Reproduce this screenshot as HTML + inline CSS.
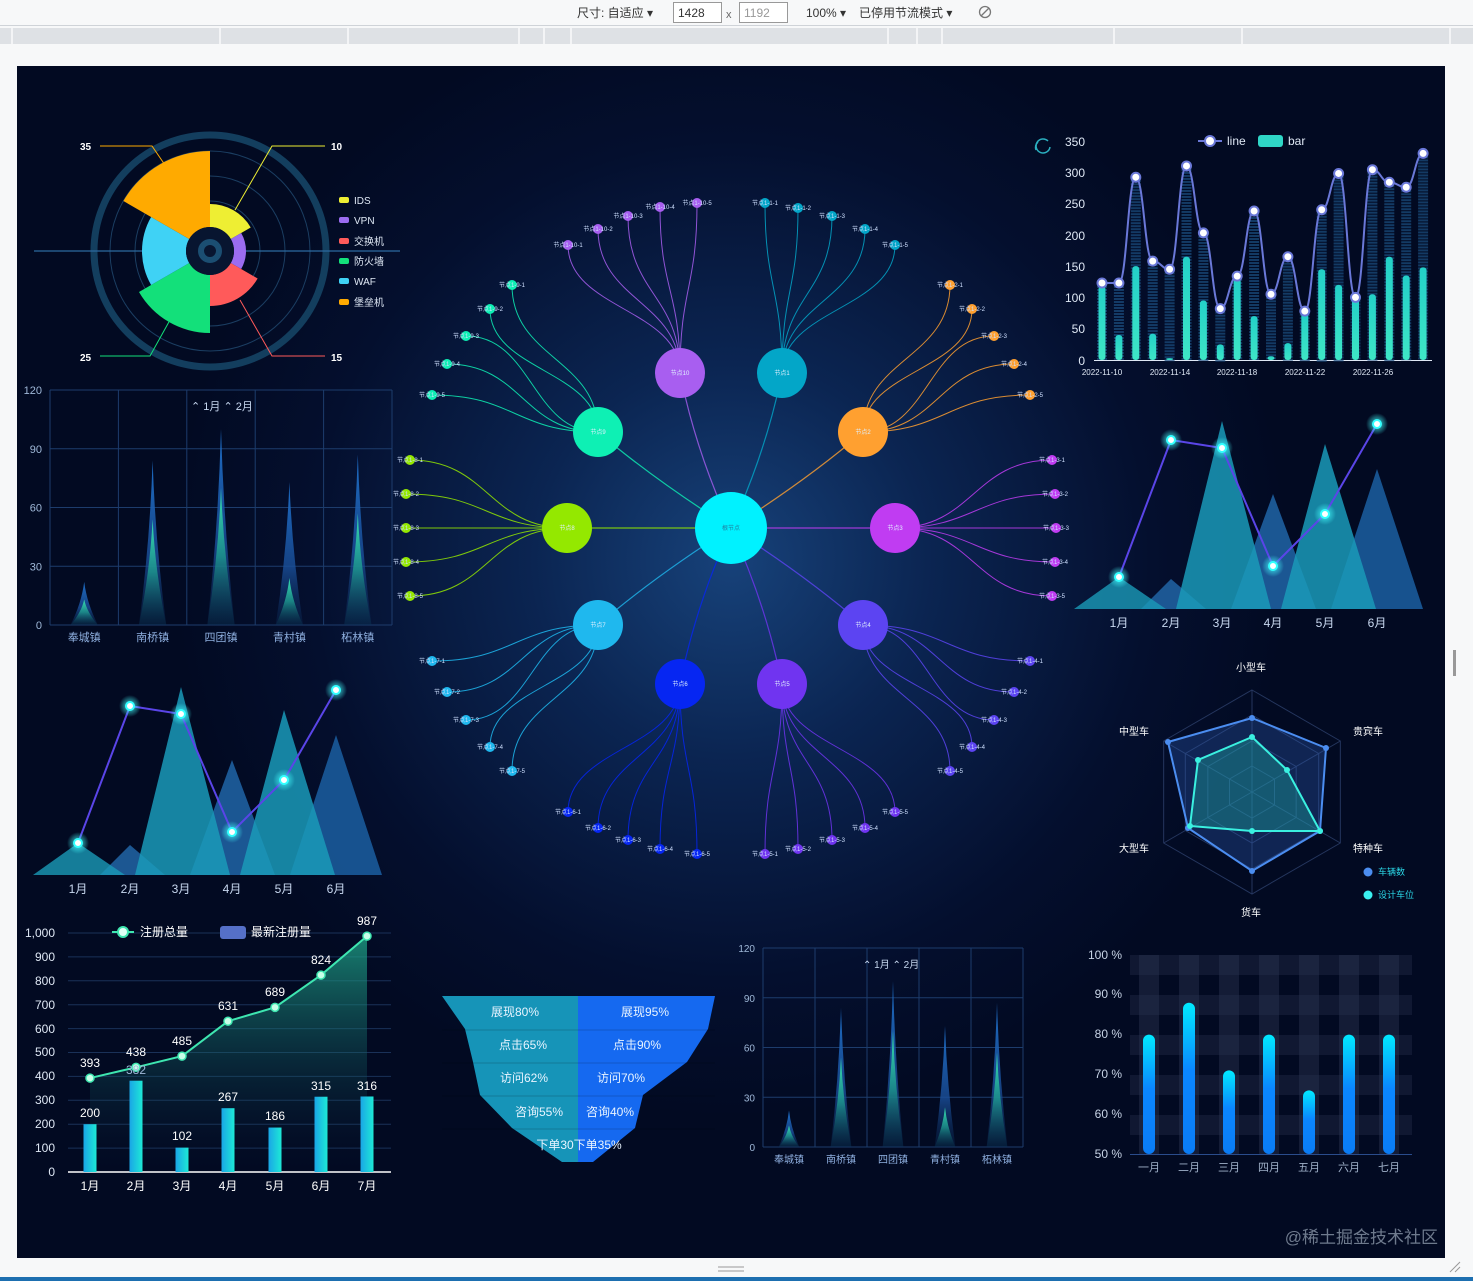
<!DOCTYPE html>
<html><head><meta charset="utf-8">
<style>
html,body{margin:0;padding:0;background:#f7f8f9;width:1473px;height:1281px;overflow:hidden}
svg{display:block}
text{font-family:"Liberation Sans","Noto Sans CJK SC",sans-serif}
</style></head>
<body>
<svg id="s" width="1473" height="1281" viewBox="0 0 1473 1281" xmlns="http://www.w3.org/2000/svg">
<defs>
<radialGradient id="bgG" cx="731" cy="560" r="560" gradientUnits="userSpaceOnUse">
<stop offset="0" stop-color="#17427a"/><stop offset="0.35" stop-color="#0b2552"/><stop offset="0.75" stop-color="#040f2e"/><stop offset="1" stop-color="#020a22"/>
</radialGradient>
<linearGradient id="spB" x1="0" y1="0" x2="0" y2="1"><stop offset="0" stop-color="#1e6fc8"/><stop offset="0.6" stop-color="#1a4f9a" stop-opacity="0.8"/><stop offset="1" stop-color="#0b2a55" stop-opacity="0.3"/></linearGradient>
<linearGradient id="spG" x1="0" y1="0" x2="0" y2="1"><stop offset="0" stop-color="#39e0b0"/><stop offset="0.5" stop-color="#1e9a90" stop-opacity="0.8"/><stop offset="1" stop-color="#0a3b55" stop-opacity="0.2"/></linearGradient>
<linearGradient id="barT" x1="0" y1="0" x2="0" y2="1"><stop offset="0" stop-color="#23d0c8"/><stop offset="1" stop-color="#3ee6c6"/></linearGradient>
<linearGradient id="barBlue" x1="0" y1="0" x2="0" y2="1"><stop offset="0" stop-color="#00eaff"/><stop offset="0.45" stop-color="#0a86ff"/><stop offset="1" stop-color="#0a7cf5"/></linearGradient>
<linearGradient id="regB" x1="0" y1="0" x2="1" y2="0"><stop offset="0" stop-color="#1aa6e6"/><stop offset="1" stop-color="#1de9d6"/></linearGradient>
<linearGradient id="areaG" x1="0" y1="0" x2="0" y2="1"><stop offset="0" stop-color="#1fa88a" stop-opacity="0.75"/><stop offset="1" stop-color="#0a2040" stop-opacity="0"/></linearGradient>
<linearGradient id="stripe" x1="0" y1="0" x2="0" y2="1"><stop offset="0" stop-color="#1f4f86"/><stop offset="1" stop-color="#0c2a50"/></linearGradient>
<radialGradient id="glow"><stop offset="0" stop-color="#4ff" stop-opacity="0.9"/><stop offset="1" stop-color="#4ff" stop-opacity="0"/></radialGradient>
</defs>

<!-- browser toolbar -->
<rect x="0" y="0" width="1473" height="25" fill="#f7f8f9"/>
<line x1="0" y1="25.5" x2="1473" y2="25.5" stroke="#cfd3d8"/>
<text x="577" y="17" font-size="12" fill="#333">尺寸: 自适应 ▾</text>
<rect x="673.5" y="2.5" width="48" height="20" fill="#fff" stroke="#999"/>
<text x="678" y="17" font-size="12" fill="#333">1428</text>
<text x="726" y="18" font-size="11" fill="#666">x</text>
<rect x="739.5" y="2.5" width="48" height="20" fill="#fff" stroke="#999"/>
<text x="744" y="17" font-size="12" fill="#999">1192</text>
<text x="806" y="17" font-size="12" fill="#333">100% ▾</text>
<text x="859" y="17" font-size="12" fill="#333">已停用节流模式 ▾</text>
<circle cx="985" cy="12" r="5.5" fill="none" stroke="#777" stroke-width="1.3"/><line x1="981" y1="16" x2="989" y2="8" stroke="#777" stroke-width="1.3"/>
<rect x="0" y="28" width="1473" height="16" fill="#dee1e5"/>
<g stroke="#f3f4f6" stroke-width="2">
<line x1="12" y1="28" x2="12" y2="44"/><line x1="220" y1="28" x2="220" y2="44"/><line x1="348" y1="28" x2="348" y2="44"/><line x1="519" y1="28" x2="519" y2="44"/><line x1="544" y1="28" x2="544" y2="44"/><line x1="571" y1="28" x2="571" y2="44"/><line x1="888" y1="28" x2="888" y2="44"/><line x1="917" y1="28" x2="917" y2="44"/><line x1="942" y1="28" x2="942" y2="44"/><line x1="1114" y1="28" x2="1114" y2="44"/><line x1="1242" y1="28" x2="1242" y2="44"/><line x1="1450" y1="28" x2="1450" y2="44"/>
</g>
<rect x="1453" y="650" width="3" height="26" fill="#999"/>
<rect x="0" y="1277" width="1473" height="4" fill="#1d6fb0"/>
<line x1="718" y1="1267" x2="744" y2="1267" stroke="#999"/><line x1="718" y1="1271" x2="744" y2="1271" stroke="#999"/>

<!-- panel -->
<rect x="17" y="66" width="1428" height="1192" fill="url(#bgG)"/>

<g id="dyn"></g>

<!-- static texts: polar legend -->
<g font-size="10" fill="#dfe8f5">
<rect x="339" y="197" width="10" height="6" rx="2" fill="#eeee33"/><text x="354" y="204">IDS</text>
<rect x="339" y="217" width="10" height="6" rx="2" fill="#9b6cf0"/><text x="354" y="224">VPN</text>
<rect x="339" y="238" width="10" height="6" rx="2" fill="#ff5a5a"/><text x="354" y="245">交换机</text>
<rect x="339" y="258" width="10" height="6" rx="2" fill="#13e07a"/><text x="354" y="265">防火墙</text>
<rect x="339" y="278" width="10" height="6" rx="2" fill="#3fd2f5"/><text x="354" y="285">WAF</text>
<rect x="339" y="299" width="10" height="6" rx="2" fill="#ffaa00"/><text x="354" y="306">堡垒机</text>
</g>
<g font-size="10" fill="#fff" font-weight="bold">
<text x="80" y="150">35</text><text x="331" y="150">10</text><text x="80" y="361">25</text><text x="331" y="361">15</text>
</g>

<!-- bottom-left chart texts -->
<g font-size="12" fill="#dfe8f5" text-anchor="end">
<text x="55" y="937">1,000</text><text x="55" y="961">900</text><text x="55" y="985">800</text><text x="55" y="1009">700</text><text x="55" y="1033">600</text><text x="55" y="1056">500</text><text x="55" y="1080">400</text><text x="55" y="1104">300</text><text x="55" y="1128">200</text><text x="55" y="1152">100</text><text x="55" y="1176">0</text>
</g>
<g font-size="12" fill="#fff" text-anchor="middle">
<text x="90" y="1190">1月</text><text x="136" y="1190">2月</text><text x="182" y="1190">3月</text><text x="228" y="1190">4月</text><text x="275" y="1190">5月</text><text x="321" y="1190">6月</text><text x="367" y="1190">7月</text>
<text x="90" y="1067">393</text><text x="136" y="1056">438</text><text x="182" y="1045">485</text><text x="228" y="1010">631</text><text x="275" y="996">689</text><text x="321" y="964">824</text><text x="367" y="925">987</text>
<text x="90" y="1117">200</text><text x="136" y="1074" fill="#9fb8d8">382</text><text x="182" y="1140">102</text><text x="228" y="1101">267</text><text x="275" y="1120">186</text><text x="321" y="1090">315</text><text x="367" y="1090">316</text>
</g>
<line x1="112" y1="932" x2="134" y2="932" stroke="#3ee6b0" stroke-width="2"/><circle cx="123" cy="932" r="5" fill="#e0fff5" stroke="#3ee6b0" stroke-width="2"/>
<text x="140" y="936" font-size="12" fill="#fff">注册总量</text>
<rect x="220" y="926" width="26" height="13" rx="3" fill="#5570c8"/>
<text x="251" y="936" font-size="12" fill="#fff">最新注册量</text>

<!-- funnel -->
<polygon points="578,996 442,996 465,1029 473,1062 480,1095 512,1128 562,1162 578,1162" fill="#1694b8"/>
<polygon points="578,996 715,996 708,1029 687,1062 643,1095 635,1128 593,1162 578,1162" fill="#1569f0"/>
<g fill="#000" opacity="0.08"><rect x="442" y="1029" width="273" height="2"/><rect x="442" y="1062" width="273" height="2"/><rect x="442" y="1095" width="273" height="2"/><rect x="442" y="1128" width="273" height="2"/></g>
<g font-size="12" fill="#e8f4ff" text-anchor="middle">
<text x="515" y="1016">展现80%</text><text x="645" y="1016">展现95%</text>
<text x="523" y="1049">点击65%</text><text x="637" y="1049">点击90%</text>
<text x="524" y="1082">访问62%</text><text x="621" y="1082">访问70%</text>
<text x="539" y="1116">咨询55%</text><text x="610" y="1116">咨询40%</text>
<text x="579" y="1149">下单30下单35%</text>
</g>

<!-- right top chart texts -->
<g font-size="12" fill="#dfe8f5" text-anchor="end">
<text x="1085" y="146">350</text><text x="1085" y="177">300</text><text x="1085" y="208">250</text><text x="1085" y="240">200</text><text x="1085" y="271">150</text><text x="1085" y="302">100</text><text x="1085" y="333">50</text><text x="1085" y="365">0</text>
</g>
<g font-size="8" fill="#dfe8f5" text-anchor="middle">
<text x="1102" y="375">2022-11-10</text><text x="1170" y="375">2022-11-14</text><text x="1237" y="375">2022-11-18</text><text x="1305" y="375">2022-11-22</text><text x="1373" y="375">2022-11-26</text>
</g>
<line x1="1198" y1="141" x2="1222" y2="141" stroke="#6a78d8" stroke-width="2"/><circle cx="1210" cy="141" r="5" fill="#fff" stroke="#6a78d8" stroke-width="2"/>
<text x="1227" y="145" font-size="12" fill="#dfe8f5">line</text>
<rect x="1258" y="135" width="25" height="12" rx="3" fill="#2fd6c6"/>
<text x="1288" y="145" font-size="12" fill="#dfe8f5">bar</text>
<path d="M1050,147 a7,7 0 1 1 -2,-6" fill="none" stroke="#2bb0c0" stroke-width="1.5"/><path d="M1036,150 a7,7 0 0 1 2,-8" fill="none" stroke="#2bb0c0" stroke-width="1.5"/>

<!-- radar texts -->
<g font-size="10" fill="#fff" text-anchor="middle">
<text x="1251" y="671">小型车</text><text x="1368" y="735">贵宾车</text><text x="1368" y="852">特种车</text><text x="1251" y="916">货车</text><text x="1134" y="852">大型车</text><text x="1134" y="735">中型车</text>
</g>
<circle cx="1368" cy="872" r="4.5" fill="#4b8df0"/><text x="1378" y="875" font-size="9" fill="#2ad6e6">车辆数</text>
<circle cx="1368" cy="895" r="4.5" fill="#3af0f0"/><text x="1378" y="898" font-size="9" fill="#2ad6e6">设计车位</text>

<!-- right bottom -->
<g font-size="12" fill="#c8d4e6" text-anchor="end">
<text x="1122" y="959">100 %</text><text x="1122" y="998">90 %</text><text x="1122" y="1038">80 %</text><text x="1122" y="1078">70 %</text><text x="1122" y="1118">60 %</text><text x="1122" y="1158">50 %</text>
</g>
<g font-size="11" fill="#9fb0c8" text-anchor="middle">
<text x="1149" y="1171">一月</text><text x="1189" y="1171">二月</text><text x="1229" y="1171">三月</text><text x="1269" y="1171">四月</text><text x="1309" y="1171">五月</text><text x="1349" y="1171">六月</text><text x="1389" y="1171">七月</text>
</g>

<text x="1438" y="1243" font-size="17" fill="#8a96a8" text-anchor="end" opacity="0.8">@稀土掘金技术社区</text>
<path d="M1450,1272 L1460,1262 M1455,1272 L1460,1267" stroke="#999"/>
</svg>

<script>
(function(){
var out=[];function a(s){out.push(s);}
// ---- polar chart
var cx=210,cy=251;
a('<circle cx="'+cx+'" cy="'+cy+'" r="116" fill="none" stroke="#133e5e" stroke-width="7"/>');
[100,75,50].forEach(function(r){a('<circle cx="'+cx+'" cy="'+cy+'" r="'+r+'" fill="none" stroke="#1b3e62" stroke-width="1"/>');});
a('<line x1="34" y1="251" x2="400" y2="251" stroke="#2c6aa0" stroke-width="1.2"/>');
function pt(r,deg){var t=deg*Math.PI/180;return [cx+r*Math.sin(t),cy-r*Math.cos(t)];}
function sector(r0,r1,d0,d1,c){var p1=pt(r1,d0),p2=pt(r1,d1),p3=pt(r0,d1),p4=pt(r0,d0);
a('<path d="M'+p4+' L'+p1+' A'+r1+','+r1+' 0 0 1 '+p2+' L'+p3+' A'+r0+','+r0+' 0 0 0 '+p4+'Z" fill="'+c+'"/>');}
sector(24,47,0,60,'#eeee33');sector(24,36,60,120,'#9b6cf0');sector(24,55,120,180,'#ff5a5a');
sector(24,82,180,240,'#13e07a');sector(24,68,240,300,'#3fd2f5');sector(24,100,300,360,'#ffaa00');
a('<circle cx="'+cx+'" cy="'+cy+'" r="24" fill="#081530"/><circle cx="'+cx+'" cy="'+cy+'" r="9" fill="none" stroke="#1b4e72" stroke-width="6"/>');
a('<polyline points="100,146 152,146 165,165" fill="none" stroke="#ffaa00"/>');
a('<polyline points="325,146 272,146 235,210" fill="none" stroke="#eeee33"/>');
a('<polyline points="100,356 150,356 170,320" fill="none" stroke="#13e07a"/>');
a('<polyline points="325,356 272,356 240,300" fill="none" stroke="#ff5a5a"/>');

// ---- spike bar chart
function spikeChart(x0,y0,w,h,fs){
 var yb=y0+h;
 for(var i=0;i<5;i++){var y=y0+h*i/4;a('<line x1="'+x0+'" y1="'+y+'" x2="'+(x0+w)+'" y2="'+y+'" stroke="#1d3c6c" stroke-width="1"/>');}
 for(var i=0;i<=5;i++){var x=x0+w*i/5;a('<line x1="'+x+'" y1="'+y0+'" x2="'+x+'" y2="'+yb+'" stroke="#1d3c6c" stroke-width="1"/>');}
 var lab=['120','90','60','30','0'];
 for(var i=0;i<5;i++)a('<text x="'+(x0-8)+'" y="'+(y0+h*i/4+4)+'" font-size="'+fs+'" fill="#9fb8d8" text-anchor="end">'+lab[i]+'</text>');
 var cat=['奉城镇','南桥镇','四团镇','青村镇','柘林镇'],vb=[22,84,100,73,87],vg=[13,54,70,24,57];
 var hw=w/5*0.2;
 for(var i=0;i<5;i++){var c=x0+w/5*(i+0.5);
  function sp(v,f){var t=yb-h*v/120;a('<path d="M'+(c-hw)+','+yb+' Q'+(c-hw*0.2)+','+(yb-h*v/240)+' '+c+','+t+' Q'+(c+hw*0.2)+','+(yb-h*v/240)+' '+(c+hw)+','+yb+'Z" fill="url(#'+f+')"/>');}
  sp(vb[i],'spB');sp(vg[i],'spG');
  a('<text x="'+c+'" y="'+(yb+16)+'" font-size="'+fs+'" fill="#8fb0e0" text-anchor="middle">'+cat[i]+'</text>');}
 var lx=x0+w/2;
 a('<text x="'+(lx-30)+'" y="'+(y0+20)+'" font-size="'+fs+'" fill="#c8d8f0">⌃ 1月  ⌃ 2月</text>');
}
spikeChart(50,390,342,235,11);
spikeChart(763,948,260,199,10);

// ---- mountain chart
function mountain(dx,dy){
 function tri(x1,x2,px,py,c,op){a('<polygon points="'+(x1+dx)+','+(875+dy)+' '+(px+dx)+','+(py+dy)+' '+(x2+dx)+','+(875+dy)+'" fill="'+c+'" opacity="'+op+'"/>');}
 tri(290,382,336,735,'#1a5a9a',0.9);
 tri(190,275,232,760,'#1e5fa0',0.9);
 tri(100,165,130,845,'#1f5f9e',0.9);
 tri(33,125,78,843,'#1a9ab8',0.8);
 tri(135,230,181,687,'#1a9ab8',0.85);
 tri(240,335,284,710,'#1a9ab8',0.85);
 var pts=[[78,843],[130,706],[181,714],[232,832],[284,780],[336,690]];
 a('<polyline points="'+pts.map(function(p){return (p[0]+dx)+','+(p[1]+dy);}).join(' ')+'" fill="none" stroke="#5a45e8" stroke-width="2"/>');
 pts.forEach(function(p){a('<circle cx="'+(p[0]+dx)+'" cy="'+(p[1]+dy)+'" r="11" fill="url(#glow)"/><circle cx="'+(p[0]+dx)+'" cy="'+(p[1]+dy)+'" r="4" fill="#fff" stroke="#3ff" stroke-width="2"/>');});
 var l=['1月','2月','3月','4月','5月','6月'];
 pts.forEach(function(p,i){a('<text x="'+(p[0]+dx)+'" y="'+(893+dy)+'" font-size="12" fill="#c8d8f0" text-anchor="middle">'+l[i]+'</text>');});
}
mountain(0,0);mountain(1041,-266);

// ---- bottom-left line/bar
for(var i=0;i<=10;i++){var y=1172-i*23.9;a('<line x1="68" y1="'+y+'" x2="391" y2="'+y+'" stroke="#1a3158" stroke-width="1"/>');}
a('<line x1="68" y1="1172" x2="391" y2="1172" stroke="#fff" stroke-width="1.5"/>');
var xs=[90,136,182,228,275,321,367],lv=[393,438,485,631,689,824,987],bv=[200,382,102,267,186,315,316];
var lp=xs.map(function(x,i){return [x,1172-lv[i]*0.239];});
a('<path d="M'+lp.map(function(p){return p.join(',');}).join(' L')+' L367,1172 L90,1172Z" fill="url(#areaG)"/>');
xs.forEach(function(x,i){var hh=bv[i]*0.239;a('<rect x="'+(x-6.5)+'" y="'+(1172-hh)+'" width="13" height="'+hh+'" fill="url(#regB)"/>');});
a('<polyline points="'+lp.map(function(p){return p.join(',');}).join(' ')+'" fill="none" stroke="#3ee6b0" stroke-width="2"/>');
lp.forEach(function(p){a('<circle cx="'+p[0]+'" cy="'+p[1]+'" r="4" fill="#c8ffe8" stroke="#3ee6b0" stroke-width="1.5"/>');});

// ---- right top line bar
var L=[123,123,292,158,145,310,203,82,134,238,105,165,78,240,298,100,304,284,276,330];
var B=[118,40,150,42,3,165,95,25,130,70,6,27,75,145,120,100,105,165,135,148];
var k=0.626,y0=360;
a('<line x1="1094" y1="360.5" x2="1432" y2="360.5" stroke="#dfe8f5"/>');
for(var i=0;i<20;i++){var x=1102+i*16.9;
 var th=L[i]*k;
 for(var yy=y0-th;yy<y0;yy+=3)a('<rect x="'+(x-5)+'" y="'+yy+'" width="10" height="2" fill="#1b4e80" opacity="0.7"/>');
 var bh=B[i]*k;a('<rect x="'+(x-3.5)+'" y="'+(y0-bh)+'" width="7" height="'+bh+'" rx="3" fill="url(#barT)"/>');}
var d='M'+1102+','+(y0-L[0]*k);
for(var i=1;i<20;i++){var x0_=1102+(i-1)*16.9,x1_=1102+i*16.9,ya=y0-L[i-1]*k,yb_=y0-L[i]*k;d+=' C'+(x0_+8)+','+ya+' '+(x1_-8)+','+yb_+' '+x1_+','+yb_;}
a('<path d="'+d+'" fill="none" stroke="#6a78d8" stroke-width="2"/>');
for(var i=0;i<20;i++){a('<circle cx="'+(1102+i*16.9)+'" cy="'+(y0-L[i]*k)+'" r="4.5" fill="#fff" stroke="#6a78d8" stroke-width="2"/>');}

// ---- radar
var rc=[1252,792],R=102;
function hx(r){var s=[];for(var i=0;i<6;i++){var t=i*Math.PI/3;s.push((rc[0]+r*Math.sin(t))+','+(rc[1]-r*Math.cos(t)));}return s.join(' ');}
[102,77,51,26].forEach(function(r){a('<polygon points="'+hx(r)+'" fill="none" stroke="#25365e" stroke-width="1"/>');});
for(var i=0;i<6;i++){var t=i*Math.PI/3;a('<line x1="'+rc[0]+'" y1="'+rc[1]+'" x2="'+(rc[0]+R*Math.sin(t))+'" y2="'+(rc[1]-R*Math.cos(t))+'" stroke="#25365e"/>');}
var s1=[[1252,718],[1326,748],[1320,831],[1252,871],[1188,828],[1168,742]];
var s2=[[1252,737],[1287,770],[1320,831],[1252,831],[1190,826],[1198,760]];
a('<polygon points="'+s1.join(' ')+'" fill="#2a5ab0" fill-opacity="0.35" stroke="#4b8df0" stroke-width="2"/>');
a('<polygon points="'+s2.join(' ')+'" fill="#1fb8a8" fill-opacity="0.35" stroke="#3af0e0" stroke-width="2"/>');
s1.forEach(function(p){a('<circle cx="'+p[0]+'" cy="'+p[1]+'" r="3" fill="#4b8df0"/>');});
s2.forEach(function(p){a('<circle cx="'+p[0]+'" cy="'+p[1]+'" r="3" fill="#3af0e0"/>');});

// ---- right bottom bars
for(var i=0;i<5;i++)a('<rect x="1130" y="'+(955+i*40)+'" width="282" height="20" fill="#2a3350" opacity="0.35"/>');
for(var i=0;i<7;i++)a('<rect x="'+(1139+i*40)+'" y="955" width="20" height="199" fill="#2a3350" opacity="0.45"/>');
a('<line x1="1130" y1="1154.5" x2="1412" y2="1154.5" stroke="#2a4c8c"/>');
var pv=[80,88,71,80,66,80,80];
pv.forEach(function(v,i){var x=1149+i*40,top=1154-(v-50)*3.98;a('<rect x="'+(x-6)+'" y="'+top+'" width="12" height="'+(1154-top)+'" rx="6" fill="url(#barBlue)"/>');});

// ---- graph
var nodes=[
 {n:'节点10',x:680,y:373,c:'#a85ef0',L:[[568,245],[598,229],[628,216],[660,207],[697,203]]},
 {n:'节点1',x:782,y:373,c:'#03a6c8',L:[[765,203],[798,208],[832,216],[865,229],[895,245]]},
 {n:'节点9',x:598,y:432,c:'#0ef0b4',L:[[512,285],[490,309],[466,336],[447,364],[432,395]]},
 {n:'节点2',x:863,y:432,c:'#ffa030',L:[[950,285],[972,309],[994,336],[1014,364],[1030,395]]},
 {n:'节点8',x:567,y:528,c:'#94e800',L:[[410,460],[406,494],[406,528],[406,562],[410,596]]},
 {n:'节点3',x:895,y:528,c:'#c03cf2',L:[[1052,460],[1055,494],[1056,528],[1055,562],[1052,596]]},
 {n:'节点7',x:598,y:625,c:'#1fb8ee',L:[[432,661],[447,692],[466,720],[490,747],[512,771]]},
 {n:'节点4',x:863,y:625,c:'#5c44f2',L:[[1030,661],[1014,692],[994,720],[972,747],[950,771]]},
 {n:'节点6',x:680,y:684,c:'#0626f2',L:[[568,812],[598,828],[628,840],[660,849],[697,854]]},
 {n:'节点5',x:782,y:684,c:'#7034f0',L:[[765,854],[798,849],[832,840],[865,828],[895,812]]}];
var C=[731,528];
nodes.forEach(function(o,ni){
 a('<path d="M'+C+' Q'+((C[0]+o.x)/2+(ni%2?10:-10))+','+((C[1]+o.y)/2)+' '+o.x+','+o.y+'" fill="none" stroke="'+o.c+'" stroke-width="1.2" opacity="0.8"/>');
 o.L.forEach(function(p,j){
  var side=Math.abs(p[0]-o.x)>Math.abs(p[1]-o.y);
  var c1=side?[(p[0]+o.x)/2,p[1]]:[p[0],(p[1]+o.y)/2], c2=side?[(p[0]+o.x)/2,o.y]:[o.x,(p[1]+o.y)/2];
  a('<path d="M'+o.x+','+o.y+' C'+c2+' '+c1+' '+p+'" fill="none" stroke="'+o.c+'" stroke-width="1" opacity="0.85"/>');
 });
});
nodes.forEach(function(o,ni){
 o.L.forEach(function(p,j){
  a('<circle cx="'+p[0]+'" cy="'+p[1]+'" r="5" fill="'+o.c+'"/>');
  a('<text x="'+p[0]+'" y="'+(p[1]+2)+'" font-size="6" fill="#cfe0ff" text-anchor="middle">'+o.n.replace('节点','节点1-')+'-'+(j+1)+'</text>');
 });
 a('<circle cx="'+o.x+'" cy="'+o.y+'" r="25" fill="'+o.c+'"/>');
 a('<text x="'+o.x+'" y="'+(o.y+2)+'" font-size="6" fill="#e0f0ff" text-anchor="middle">'+o.n+'</text>');
});
a('<circle cx="731" cy="528" r="36" fill="#00f2ff"/><text x="731" y="530" font-size="6" fill="#2080a0" text-anchor="middle">根节点</text>');
document.getElementById('dyn').innerHTML=out.join('');
})();
</script>
</body></html>
